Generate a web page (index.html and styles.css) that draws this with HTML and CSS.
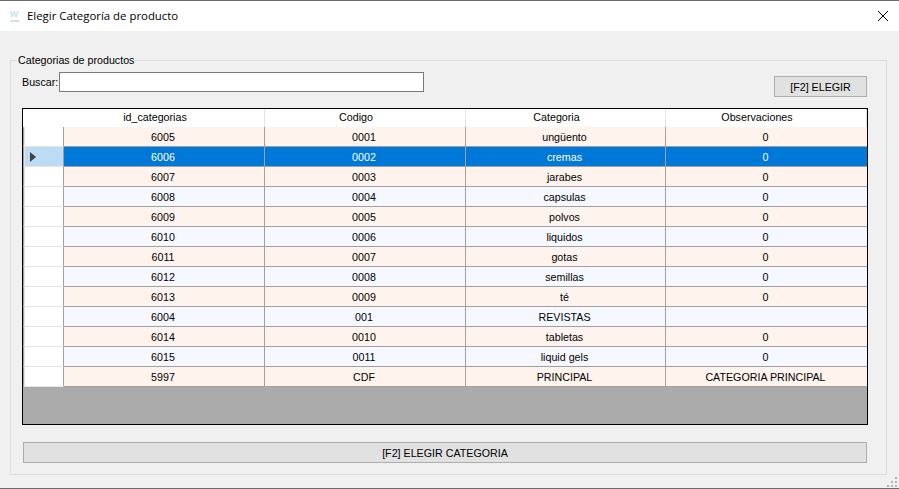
FILE: index.html
```html
<!DOCTYPE html>
<html>
<head>
<meta charset="utf-8" />
<title>Elegir Categoría de producto</title>
<link rel="stylesheet" href="styles.css">
</head>
<body>
<div class="ventana">
    <div class="titulo">
        <div class="icono"><span class="icono-w">W</span><span class="icono-base"></span></div>
        <span class="titulo-texto">Elegir Categoría de producto</span>
        <svg class="cerrar" width="12" height="12" viewBox="0 0 12 12"><path d="M1 1L11 11M11 1L1 11" stroke="#000" stroke-width="1" fill="none"/></svg>
    </div>
    <div class="cuerpo">
        <fieldset class="grupo">
            <legend>Categorias de productos</legend>
            <div class="busqueda">
                <label class="buscar-label" for="buscar">Buscar:</label>
                <input type="text" id="buscar" class="buscar-input">
                <button class="boton boton-elegir">[F2] ELEGIR</button>
            </div>
            <div class="grilla">
                <div class="fila cabecera">
                    <div class="selector"></div><div>id_categorias</div><div>Codigo</div><div>Categoria</div><div>Observaciones</div>
                </div>
                <div class="fila impar"><div class="selector"></div><div>6005</div><div>0001</div><div>ungüento</div><div>0</div></div>
                <div class="fila activa"><div class="selector"><span class="flecha"></span></div><div>6006</div><div>0002</div><div>cremas</div><div>0</div></div>
                <div class="fila impar"><div class="selector"></div><div>6007</div><div>0003</div><div>jarabes</div><div>0</div></div>
                <div class="fila par"><div class="selector"></div><div>6008</div><div>0004</div><div>capsulas</div><div>0</div></div>
                <div class="fila impar"><div class="selector"></div><div>6009</div><div>0005</div><div>polvos</div><div>0</div></div>
                <div class="fila par"><div class="selector"></div><div>6010</div><div>0006</div><div>liquidos</div><div>0</div></div>
                <div class="fila impar"><div class="selector"></div><div>6011</div><div>0007</div><div>gotas</div><div>0</div></div>
                <div class="fila par"><div class="selector"></div><div>6012</div><div>0008</div><div>semillas</div><div>0</div></div>
                <div class="fila impar"><div class="selector"></div><div>6013</div><div>0009</div><div>té</div><div>0</div></div>
                <div class="fila par"><div class="selector"></div><div>6004</div><div>001</div><div>REVISTAS</div><div></div></div>
                <div class="fila impar"><div class="selector"></div><div>6014</div><div>0010</div><div>tabletas</div><div>0</div></div>
                <div class="fila par"><div class="selector"></div><div>6015</div><div>0011</div><div>liquid gels</div><div>0</div></div>
                <div class="fila impar"><div class="selector"></div><div>5997</div><div>CDF</div><div>PRINCIPAL</div><div>CATEGORIA PRINCIPAL</div></div>
            </div>
            <button class="boton boton-categoria">[F2] ELEGIR CATEGORIA</button>
        </fieldset>
    </div>
    <svg class="agarre" width="10" height="10" viewBox="0 0 10 10" fill="#b4b4b4">
        <rect x="8" y="0" width="2" height="2"/>
        <rect x="4" y="4" width="2" height="2"/><rect x="8" y="4" width="2" height="2"/>
        <rect x="0" y="8" width="2" height="2"/><rect x="4" y="8" width="2" height="2"/><rect x="8" y="8" width="2" height="2"/>
    </svg>
</div>
</body>
</html>
```

FILE: styles.css
```css
* {
    box-sizing: border-box;
}
html, body {
    margin: 0;
    padding: 0;
}
body {
    width: 899px;
    height: 489px;
    overflow: hidden;
    background: #f0f0f0;
    font-family: "Liberation Sans", Arial, sans-serif;
    font-size: 10.7px;
    color: #000;
}
.ventana {
    position: relative;
    height: 489px;
    display: flex;
    flex-direction: column;
    border-top: 1px solid #6b6b6b;
    border-bottom: 1px solid #6b6b6b;
}
.agarre {
    position: absolute;
    right: 2px;
    bottom: 1px;
}

/* barra de titulo */
.titulo {
    height: 30px;
    flex: none;
    background: #fff;
    display: flex;
    align-items: center;
    padding: 0 10px 0 9px;
}
.icono {
    width: 10px;
    height: 14px;
    margin-right: 8px;
    display: flex;
    flex-direction: column;
    align-items: center;
}
.icono-w {
    font-size: 9px;
    line-height: 10px;
    color: #a9d8ea;
}
.icono-base {
    width: 9px;
    height: 2px;
    margin-top: 1px;
    background: #cfe0e6;
}
.titulo-texto {
    font-family: "Open Sans", sans-serif;
    font-size: 11.4px;
    padding-bottom: 2px;
    flex: 1;
}
.cerrar {
    flex: none;
}

/* cuerpo */
.cuerpo {
    flex: 1;
    padding: 22px 12px 0 10px;
}
.grupo {
    margin: 0;
    height: 422px;
    padding: 5px 19px 0 11px;
    border: 1px solid #dcdcdc;
    min-width: 0;
}
.grupo legend {
    padding: 0 1px;
    margin-left: -5px;
    line-height: 14px;
}
.busqueda {
    display: flex;
    align-items: flex-start;
    height: 36px;
}
.buscar-label {
    line-height: 20px;
    width: 37px;
}
.buscar-input {
    width: 365px;
    height: 20px;
    border: 1px solid #7a7a7a;
    background: #fff;
    margin: 0;
    padding: 0 2px;
    font: inherit;
}
.boton {
    display: block;
    background: #e1e1e1;
    border: 1px solid #adadad;
    padding: 0;
    font: inherit;
    color: #000;
}
.boton-elegir {
    width: 93px;
    height: 21px;
    margin: 4px 0 0 350px;
}
.boton-categoria {
    width: 844px;
    height: 21px;
    margin-top: 17px;
    margin-left: 1px;
}

/* grilla */
.grilla {
    width: 846px;
    height: 317px;
    background: #ababab;
    border: 1px solid #000;
}
.fila {
    display: grid;
    grid-template-columns: 41px 201px 201px 200px 201px;
    height: 20px;
    line-height: 21px;
    text-align: center;
}
.fila > div {
    border-right: 1px solid #a0a0a0;
    border-bottom: 1px solid #a0a0a0;
    padding-right: 2px;
    overflow: hidden;
    white-space: nowrap;
}
.fila > div:last-child {
    border-right: 0;
}
.fila > .selector {
    background: #fff;
    border-left: 1px solid #a0a0a0;
    border-right: 1px solid #a0a0a0;
    border-bottom: 1px solid #e4e4e4;
    box-shadow: inset 1px 0 0 #e4e4e4;
    display: flex;
    align-items: center;
    padding-left: 6px;
}
.cabecera {
    height: 18px;
    line-height: 17px;
    background: #fff;
}
.fila.cabecera > div {
    border-right: 1px solid #e4e4e4;
    border-bottom: 0;
    padding-right: 18px;
}
.fila.cabecera > .selector {
    border-left: 0;
    border-right: 0;
    border-bottom: 0;
    box-shadow: none;
}
.impar {
    background: #fff3ee;
}
.par {
    background: #f6f8ff;
}
.activa {
    background: #0078d7;
    color: #fff;
}
.fila.activa > .selector {
    background: #bcdcf4;
}
.flecha {
    width: 0;
    height: 0;
    border-left: 6px solid #404040;
    border-top: 5px solid transparent;
    border-bottom: 5px solid transparent;
}
```
